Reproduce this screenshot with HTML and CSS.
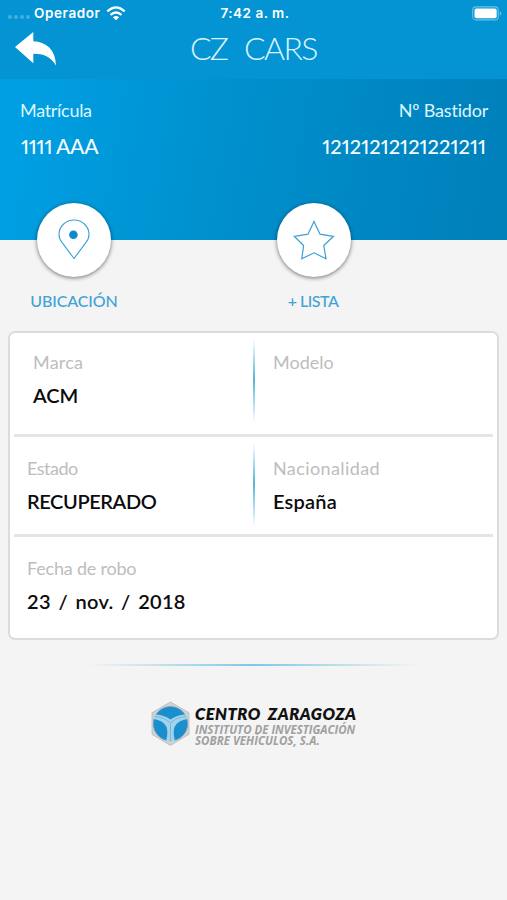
FILE: index.html
```html
<!DOCTYPE html>
<html lang="es">
<head>
<meta charset="utf-8">
<title>CZ CARS</title>
<link rel="stylesheet" href="styles.css">
</head>
<body>
<header class="topbar">
  <div class="status">
    <div class="carrier">
      <span class="dots"><i></i><i></i><i></i><i></i></span>
      <span class="operator">Operador</span>
      <svg class="wifi" width="20" height="15" viewBox="0 0 20 15"><g fill="none" stroke="#fff" stroke-width="2.3"><path d="M1.3 5.3Q10-2.6 18.7 5.3"/><path d="M4.5 8.9Q10 4 15.5 8.9"/></g><path d="M10 14.2L6.9 11.2Q10 8.6 13.1 11.2Z" fill="#fff"/></svg>
    </div>
    <span class="time">7:42 a. m.</span>
    <svg class="battery" width="31" height="15" viewBox="0 0 31 15"><rect x=".7" y=".9" width="25.6" height="13" rx="3.4" fill="none" stroke="#6fc0e6" stroke-width="1.1"/><rect x="2.5" y="2.6" width="22.2" height="9.6" rx="1.8" fill="#fff"/><path d="M27.8 5.2Q29.4 6 29.4 7.4T27.8 9.6Z" fill="#6fc0e6"/></svg>
  </div>
  <div class="nav">
    <svg class="back" width="42" height="34" viewBox="0 0 42 34"><path d="M0 15L18.3 0V9.3C32 10 40.5 18 41 33.5C35 24.5 29 21.8 18.3 21.8V31.3Z" fill="#fff"/></svg>
    <h1 class="title"><span class="cz">CZ</span><span class="cars">CARS</span></h1>
  </div>
</header>
<section class="hero">
  <div class="ident">
    <span class="hero-label plate-label">Matrícula</span>
    <span class="hero-value plate"><span class="ones">1111</span><span class="letters">AAA</span></span>
  </div>
  <div class="ident right">
    <span class="hero-label vin-label">Nº Bastidor</span>
    <span class="hero-value vin">12121212121221211</span>
  </div>
</section>
<section class="actions">
  <div class="action location">
    <div class="circle"><svg width="34" height="42" viewBox="0 0 34 42"><path d="M17 39.5L5.5 24.2C3.2 21.5 2 18.8 2 15.5A15 14.5 0 0 1 32 15.5C32 18.8 30.8 21.5 28.5 24.2Z" fill="none" stroke="#3b9fd3" stroke-width="1.1"/><circle cx="16.4" cy="15.8" r="4.3" fill="#0b8bcb"/></svg></div>
    <span class="action-text">UBICACIÓN</span>
  </div>
  <div class="action list">
    <div class="circle"><svg width="42" height="42" viewBox="0 0 42 42"><path d="M21 2.5L27 15.2L40.5 17.3L30.8 26.5L33 39.8L21 33.8L8.8 39.8L10.6 26.5L1.2 17.3L15 15.2Z" fill="none" stroke="#3b9fd3" stroke-width="1.2"/></svg></div>
    <span class="action-text lista">+ LISTA</span>
  </div>
</section>
<main class="card">
  <div class="row first">
    <div class="cell inset"><span class="label marca">Marca</span><span class="value">ACM</span></div>
    <div class="cell split"><span class="label modelo">Modelo</span></div>
  </div>
  <div class="row second">
    <div class="cell"><span class="label estado-label">Estado</span><span class="value estado">RECUPERADO</span></div>
    <div class="cell split"><span class="label nac">Nacionalidad</span><span class="value pais">España</span></div>
  </div>
  <div class="row third">
    <div class="cell"><span class="label fecha">Fecha de robo</span><span class="value date">23 / nov. / 2018</span></div>
  </div>
</main>
<div class="rule"></div>
<footer class="brand">
  <svg class="emblem" width="40" height="46" viewBox="0 0 40 46">
    <path d="M20.5 1L39 11.7V33.3L20.5 44.5L2 33.3V11.7Z" fill="#cdd2d7" stroke="#b5b9bd" stroke-width=".8"/>
    <circle cx="20.5" cy="22.7" r="17" fill="#198fcf" stroke="#5f8dab" stroke-width=".8"/>
    <path d="M4.5 13.5Q13 13.5 20.5 18.5Q28 13.5 36.5 13.5L37.5 18Q28 19 24.5 26Q22.5 32 25 39.5L20.5 41L16 39.5Q18.5 32 16.500 26Q13 19 3.5 18Z" fill="#a3d2eb"/>
    <path d="M20.5 22V40M5 15.5Q14 16 20.5 22Q27 16 36 15.5" fill="none" stroke="#74afd0" stroke-width=".8"/>
  </svg>
  <div class="brand-text">
    <span class="brand-name"><span>CENTRO</span><span class="zaragoza">ZARAGOZA</span></span>
    <span class="brand-sub">INSTITUTO DE INVESTIGACIÓN</span>
    <span class="brand-sub last">SOBRE VEHÍCULOS, S.A.</span>
  </div>
</footer>
</body>
</html>
```
FILE: styles.css
```css
* { box-sizing: border-box; }
body { margin: 0; width: 507px; height: 900px; overflow: hidden; background: #f4f4f4; font-family: Lato, "Liberation Sans", sans-serif; font-variant-ligatures: none; }
svg { display: block; flex: none; }
span { white-space: nowrap; }

.topbar { height: 79px; background: #0494d3; color: #fff; }
.status { display: grid; grid-template-columns: 1fr auto 1fr; align-items: center; height: 26px; padding: 0 5px 0 8px; font: 600 13.5px/26px Inter, sans-serif; }
.carrier { display: flex; align-items: center; }
.dots { display: flex; gap: 2px; width: 26px; padding-top: 8px; }
.dots i { width: 4px; height: 4px; border-radius: 50%; background: #45afdf; }
.operator { width: 67px; letter-spacing: .6px; }
.time { letter-spacing: .5px; }
.wifi { margin-left: 5px; }
.battery { justify-self: end; margin-right: -1px; }
.nav { display: flex; height: 53px; padding: 6px 0 0 15px; }
.title { display: flex; margin: -1px 0 0 133px; font-size: 32px; line-height: 34px; font-weight: 300; color: #d9f5ff; }
.cz { width: 54px; letter-spacing: -2px; }
.cars { letter-spacing: -1.6px; }

.hero { display: flex; justify-content: space-between; height: 161px; padding: 19px 19px 0 20px; background: linear-gradient(100deg, #009fe3 5%, #0090cd 45%, #007fb9 100%); color: #dff6ff; }
.ident { display: flex; flex-direction: column; }
.right { align-items: flex-end; }
.hero-label { font-size: 18px; line-height: 24px; letter-spacing: -.3px; }
.vin-label { letter-spacing: -.2px; }
.hero-value { font-size: 21px; line-height: 34px; margin-top: 7px; font-weight: 500; color: #f2fcff; font-variant-numeric: proportional-nums; }
.plate { display: flex; padding-left: 1px; }
.ones { width: 35px; font-size: 20px; letter-spacing: -.2px; }
.letters { letter-spacing: -.2px; }
.vin { font-size: 20px; letter-spacing: .05px; margin-right: 2px; }

.actions { display: flex; height: 91px; }
.action { display: flex; flex-direction: column; align-items: center; width: 120px; margin-top: -37px; }
.location { margin-left: 14px; }
.list { margin-left: 120px; }
.circle { display: flex; align-items: center; justify-content: center; width: 74px; height: 74px; border-radius: 50%; background: #fff; box-shadow: 0 1px 4px rgba(0,0,0,.55); }
.action-text { margin-top: 12px; font-size: 16px; line-height: 24px; color: #3fa3d6; font-weight: 500; letter-spacing: -.1px; }
.lista { letter-spacing: -.5px; margin-left: -2px; }

.card { width: 491px; height: 309px; margin-left: 8px; border: 2px solid #dcdcdc; border-radius: 7px; background: #fff; padding: 0 4px; }
.row { display: grid; grid-template-columns: 239px 1fr; }
.first { height: 104px; border-bottom: 3px solid #e5e5e5; }
.second { height: 100px; border-bottom: 3px solid #e5e5e5; }
.cell { display: flex; flex-direction: column; align-items: flex-start; padding: 19px 0 0 13px; }
.first .cell { padding-top: 17px; }
.cell.inset { padding-left: 19px; }
.split { padding-left: 20px; background: linear-gradient(transparent, #55b3df 48%, transparent) left 6px / 2px 84px no-repeat; }
.label { font-size: 18px; line-height: 24px; color: #bdbdbd; }
.marca { letter-spacing: .2px; }
.estado-label { letter-spacing: -.5px; }
.nac { letter-spacing: .4px; }
.fecha { letter-spacing: -.2px; }
.value { margin-top: 4px; font-size: 20px; line-height: 34px; font-weight: 600; color: #0c0c0c; }
.estado { letter-spacing: -.4px; }
.pais { letter-spacing: .2px; }
.date { letter-spacing: .3px; word-spacing: 2.3px; }

.rule { width: 330px; height: 2px; margin: 24px 0 0 88px; background: linear-gradient(90deg, transparent, #80c7e6 50%, transparent); }
.brand { display: flex; margin: 35px 0 0 150px; }
.brand-text { display: flex; flex-direction: column; margin: 3px 0 0 5px; }
.brand-name { display: flex; font: italic 800 16.5px/20px Lato, sans-serif; letter-spacing: .5px; color: #111; }
.zaragoza { margin-left: 7px; }
.brand-sub { font: italic 700 11.5px/11px "Open Sans", sans-serif; height: 11px; letter-spacing: -.03px; color: #a0a0a0; }
.brand-sub.last { letter-spacing: .03px; }
```
